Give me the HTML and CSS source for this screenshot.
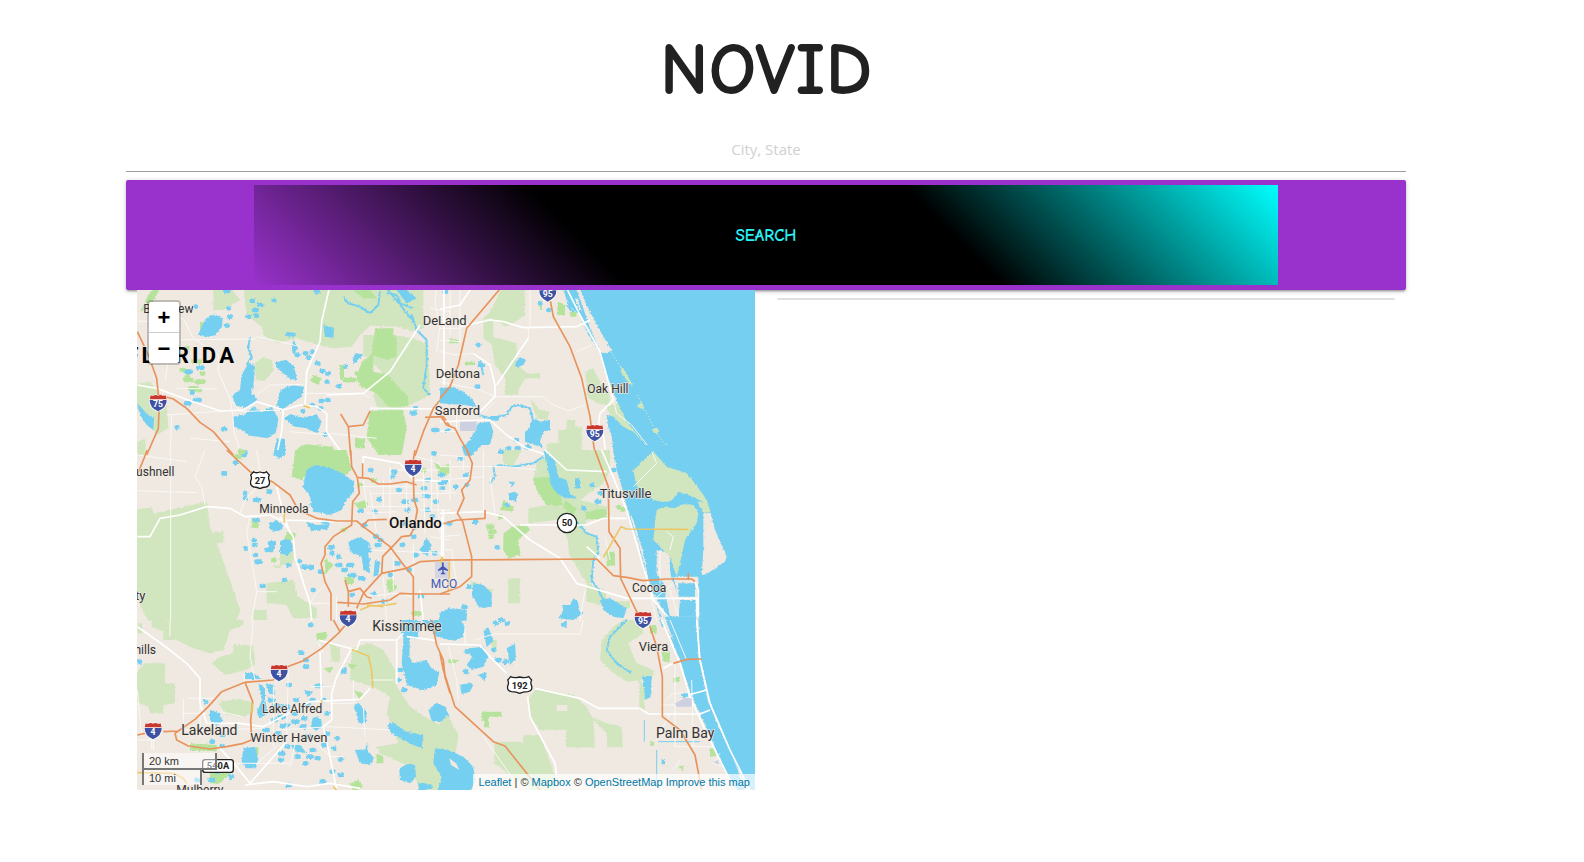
FILE: index.html
```
<!DOCTYPE html>
<html lang="en">
<head>
<meta charset="utf-8">
<meta name="viewport" content="width=device-width, initial-scale=1">
<title>NOVID</title>
<link rel="stylesheet" href="styles.css">
</head>
<body>
<main class="container">
  <h1 class="title">NOVID</h1>
  <form class="search">
    <input class="search-input" type="text" placeholder="City, State" aria-label="City, State">
    <button class="search-button" type="button"><span class="search-label">Search</span></button>
  </form>
  <div class="row">
    <section class="col">
      <div class="map">
        <svg class="map-canvas" viewBox="0 0 1854 1500" preserveAspectRatio="xMidYMid slice" role="img" aria-label="Map of Central Florida">
          <defs>
            <filter id="shoreline" x="-5%" y="-5%" width="110%" height="110%">
              <feTurbulence type="fractalNoise" baseFrequency="0.16" numOctaves="2" seed="4"/>
              <feDisplacementMap in="SourceGraphic" scale="9" xChannelSelector="R" yChannelSelector="G"/>
            </filter>
            <symbol id="interstate" viewBox="0 0 57 56">
              <path d="M5 4q6 3 12 0q5-3 11 1q6-4 12-1q6 3 12 0q3 7 4 15q1 26-28 36Q0 45 1 19Q2 11 5 4z" fill="#fff"/>
              <path d="M3 19h51q1 22-26 34Q2 41 3 19z" fill="#3f51a3"/>
              <path d="M6 5q6 3 11 0q6-2 11 1q6-3 11-1q6 3 12 0l3 12H3z" fill="#c8382f"/>
            </symbol>
            <symbol id="us-route" viewBox="0 0 62 56">
              <path d="M12 3q7 6 19 1q12 5 19-1l9 10q-5 8 0 18q3 14-10 18q-11 0-18 5q-7-5-18-5Q0 45 3 31q5-10 0-18z" fill="#fff" stroke="#222" stroke-width="4"/>
            </symbol>
            <symbol id="us-route-wide" viewBox="0 0 80 58">
              <path d="M13 4q10 5 27 1q17 4 27-1l9 10q-5 8 0 18q3 15-12 17q-15 0-24 5q-9-5-24-5Q1 47 4 32q5-10 0-18z" fill="#fff" stroke="#222" stroke-width="4"/>
            </symbol>
          </defs>

          <!-- north-west -->
          <g transform="translate(-21 -15)">
            <path class="park" d="M340 0H880V130L845 140L800 125L720 122L690 150L665 185L610 190L565 180L500 160L440 175L400 150L395 125L350 90z M700 150L790 150L850 160L895 180L900 330L800 380L745 380L730 330L755 260L700 210z M375 235L400 215L425 225L432 255L405 288L378 285z M0 300L60 290L110 350L115 430L80 450L22 370z M250 5h50l30 40l-50 30h-30z M22 470l25-8v50h-25z"/>
            <path class="wood" d="M30 80L60 20L92 5L70 50L40 75z M735 130h55v25h10v60l-30 10l-40-15v50l45 10l30 35l30 30v30h-60l-35-40l-50-20l-10-30l15-45l30-20z M720 378l100-3l10 55l-15 80h-70l-35-55z M500 510q0-40 50-30l60 5l20 50z M550 270l25 10l-10 20l-25-12z M675 460h30v30h-30z M210 110l25 5v40l-25-10z M630 240h12v45h-12z M670 15h50l20 25h-40z"/>
            <path class="ponds woods" d="M155 255h6M170 275h4M190 230h20M165 285h20M200 290h20M180 310h20M200 315h10M215 265h5M150 210h4M170 190h3M645 285h30M680 265h10"/>
            <path class="water" d="M225 105Q240 86 262 90L278 100L276 125L255 152L222 155L204 150L214 128z M355 235L375 240L372 285L365 325L385 345L350 368L318 362L306 330L330 315L335 270z M437 230L470 225L492 245L502 285L480 282L455 260L440 248z M450 320Q470 300 498 302L522 305L515 335L485 355L455 375L440 360z M310 395L345 388L370 365L395 380L425 365L445 400L440 440L415 460L360 452L335 435L312 425z M462 400L480 388L520 398L560 388L575 410L562 445L530 430L495 425z M22 355L50 385L72 400L70 435L50 420L30 390z M440 460L465 462V512H430z M580 118L612 130L610 158L585 155z M675 205L700 208L675 238L668 225z M470 140l30 5l-10 12l-25-5z M490 165l15 20l-12 25l-8-15z M830 15l30 25l-30 15l-30-40z"/>
            <path class="river" d="M360 155L355 190L365 215L350 240M640 35L655 55L690 65L720 85L745 60L750 20M770 10L815 65L850 110L845 90L860 135L890 165L890 240L880 310L900 330M770 25L800 30L810 55L850 70"/>
            <path class="ponds" d="M365 48h4M388 60h6M372 75h8M355 95h4M378 92h2M430 45h3M195 65h2M295 70h2M298 95h5M290 122h3M170 260h12M205 248h12M168 355h10M195 345h14M185 322h3M280 432h6M140 427h2M500 210h5M525 205h3M545 200h3M560 235h4M535 218h3M575 258h5M592 265h3M590 290h2M625 303h4M645 245h2M545 360h4M572 348h6M592 345h3M518 378h2M570 370h4M845 385h10M855 370h4M910 435h12M585 448h3M285 18h10M560 20h3"/>
            <path class="minor" d="M22 108L70 110M130 80L165 110L190 160L265 210L265 260L300 340L330 380L450 375M110 165L380 162M140 310L260 312M125 165L105 290M110 390L275 378M120 510L125 390M180 460L300 470M525 325L700 325M380 330L420 300L520 298M380 155L450 170L510 185M700 325L720 340M600 445L740 460M920 0L915 50L930 120L920 200M900 70L960 80M940 20V120M480 440L600 450"/>
            <path class="major" d="M600 0L575 110L570 170L530 260L525 365M22 300L80 310L160 340L270 378L340 375L380 350L460 375L510 360L560 365L590 385V440L640 510M870 120L780 260L700 325L590 330M720 370L960 372M460 375L455 440L440 510"/>
            <path class="minor" d="M265 260L300 340L308 390L312 440L335 510"/>
            <path class="highway" d="M22 140L55 210L80 280L88 355L85 430L50 510M88 330L130 342L170 370L210 412L250 440L310 510M960 310L910 370L880 440L855 512M632 387L655 425L662 512M655 425L700 420L720 378M885 397L940 395L960 425"/>
            <path class="toll" d="M520 362L540 368"/>
          </g>

          <!-- west -->
          <g transform="translate(-21 480)">
            <path class="park" d="M10 180L65 170L70 190L230 155L240 230L268 300L310 420L330 480L320 512H55L22 450H10z M250 245h30v35h-30z M425 350l65-10v-50l-40-5v70z M410 400l80-10l15 50l55 35v30h-70l-20-40l-60-5z M370 480l40 0v30h-40z"/>
            <path class="wood" d="M495 0H650L665 60L640 80L555 45L515 90L485 80L490 45z M365 205h20v30h-20z M470 245l30 5l-8 20h-30z M585 325l25 20l-25 30z M670 160l40-10l5 20l-25 10z M770 400l35 15l-30 15z M640 380l35 5l-20 20z M910 30l40 40l-20 10z"/>
            <path class="water" d="M530 60L555 45L600 52L640 72L672 95L672 125L650 150L635 180L600 195L560 185L545 170L540 140L518 110z M418 218L440 210L460 225L455 240L430 245L418 235z M450 275Q465 262 485 272L490 300L470 318L450 308z M655 275L690 260L720 280L715 310L720 370L700 360L695 320L660 305z M868 300L890 265L905 285L895 320z M930 495L960 470V512H925z M435 0H460L455 25L440 25z M528 215L560 225L600 222L590 240L560 235L545 245z M735 330L750 335L745 375L730 380z"/>
            <path class="ponds" d="M315 38h3M338 15h6M345 10h2M280 70h5M345 130h3M345 145h2M375 150h12M415 125h5M375 210h8M370 270h4M372 285h4M345 295h2M375 315h3M380 335h12M410 300h14M420 280h12M420 292h8M395 408h6M475 345h3M505 333h5M518 350h10M540 352h8M570 365h4M462 390h2M548 420h3M600 292h8M605 310h4M625 320h3M620 345h12M640 360h6M660 375h14M655 345h12M690 385h10M705 330h10M710 300h8M740 285h8M750 270h3M735 260h5M720 60h4M745 148h5M735 185h2M690 183h5M785 80h3M790 65h6M805 120h4M820 155h8M830 180h6M850 150h8M880 115h6M885 138h12M915 155h6M890 90h6M930 98h14M930 75h3M910 10h4M850 232h5M850 260h3M910 310h6M815 285h5M855 315h6M800 340h6M835 360h5M780 375h4M730 432h5M665 435h4M760 455h3M870 440h6M545 165h5M555 180h8M700 225h5M820 220h3M905 200h5M890 180h4M580 215h12M555 235h10"/>
            <path class="ponds woods" d="M320 20h10M330 5h10M690 105h4M730 90h3M880 60h5M640 240h3M600 345h2M775 395h12M790 410h4M660 395h6M430 330h5M850 490h20"/>
            <path class="minor" d="M122 0V512M22 122L200 128M22 15L170 35M225 0L195 80L215 110L225 165M380 0L390 60M330 190L345 150L420 70M360 200L350 250L370 360L380 425L365 512M380 425L440 425M700 90L710 170L830 170M710 190L800 185M780 50V220M800 60L960 60M830 90V180M860 20L930 40M920 100L930 250M690 110L850 110M880 60L885 250M870 180L960 180M850 280L850 512M720 300L940 310M545 460H600M590 400L560 430L540 460M740 250L720 120M900 260L960 270M700 440L800 430L850 440M720 130H960M905 20V180M760 90V170M620 440V512M760 380L770 512M790 320V420"/>
            <path class="major" d="M22 260H60L90 205L150 195L230 170L300 175L345 200L420 195L450 210L640 215M450 200L490 260L495 320L540 460L545 512M440 110L460 190L480 250M700 80V20L810 40L850 90L960 95M940 180V400M870 420L880 512"/>
            <path class="highway" d="M52 0L22 75M290 0L360 65L430 97L480 135L505 180L560 205L620 213L680 213L700 230L780 290L825 350L850 380V512M662 0L665 50L682 82L688 130L668 155L665 225L610 260L585 290L585 315L573 340L585 395L603 430L603 512M680 82L715 85L745 102H780L830 95L860 105M698 40V82M850 80L852 148L862 180L852 235L840 257L815 260L785 292L758 320L755 370L830 355L870 335L960 330M695 230L715 210L770 208M755 370L700 430L680 475M645 390L655 425V470M622 457L700 462L780 450L810 430L855 432L960 432M655 425L690 415L710 440L725 445M855 0L845 60M940 220H960"/>
            <path class="toll" d="M463 180V218M690 480L720 468L770 465L800 460M710 465L760 470M938 320V335M955 335V420"/>
            <path d="M915 335h45v50h-45z" fill="#d4d5e3"/>
          </g>

          <!-- south-west -->
          <g transform="translate(-21 990)">
            <path class="park" d="M65 0H340V15L300 30L280 90L240 100L190 85L140 60L100 60V35L65 20z M45 130h60v60h30v60l-35 5v25H60l-5-20l-38-15V160z M245 130L270 110L310 100V75h60l5 60l-30 15l-60 15z M265 245l60-8l45 10v30l-30 15l-55-10z M665 85L720 70L760 90L795 150V190L840 260L900 300L960 330V510H870L840 440L750 400L740 380L805 370L770 280L780 230L730 200L660 180z M600 70l30 15v40h-25z M22 10h15v30H22z"/>
            <path class="wood" d="M560 40l30-5v25l-30 5z M580 145l30-5l-10 20z M340 390l45-10v25l-40 15z M240 450l60 10l-30 30h-30z M670 210l30 10l-10 20z M660 490l25-10l15 20l-30 15z M650 130l30 5l-15 15z M180 370l80 5v18h-80z M740 400l20 10v20h-20z"/>
            <path class="water" d="M810 0H870L865 55L840 55L838 110L850 130L890 120L905 145L928 155L920 195L880 210L830 195L815 130L820 60z M875 0H960V60L920 50z M670 260L685 248L710 275L708 310L685 308L682 285z M895 270L920 248L945 260L958 290L940 308L905 302z M770 315L790 308L830 335L880 345L875 385L850 375L820 360L785 340z M675 390L705 388L712 365L712 390L732 415L720 435L690 430z M808 450Q825 425 855 435L858 470L840 490L810 480z M340 385L375 380L385 420L375 445L350 445L335 425z M240 270L270 280L278 305L260 318L240 300z M548 295Q560 285 575 300V320L558 332L542 320z M385 190L405 205V240L415 280L390 295L380 280L395 240z M410 190L430 195L435 225L415 220z M520 210L550 215L535 232z M635 145L650 140V162L632 160z M865 490l25 0v20h-25z M480 375L510 375L530 400L500 395z M345 160l20-3l30 20h-50z M218 235l20 10l-15 10z"/>
            <path class="ponds" d="M475 195h4M495 240h6M545 240h6M560 198h10M580 240h3M590 280h4M490 280h8M490 305h12M515 320h8M450 290h10M455 318h12M430 260h14M430 300h8M450 260h10M470 315h4M525 350h12M620 355h3M590 340h4M580 375h8M610 385h3M535 410h10M560 415h6M545 390h6M500 410h6M470 380h4M450 400h10M450 420h6M525 430h4M630 418h4M630 465h4M605 455h4M575 485h6M472 495h8M275 345h5M245 365h4M275 378h3M300 470h6M200 480h6M240 480h10M260 455h4M280 430h10M290 440h6M405 330h8M440 340h8M820 210h5M808 150h5M805 180h3M525 140h6M525 120h6M510 98h5M540 15h4M28 125h2M420 240h10M893 500h8M470 260h5M520 295h6M530 255h4"/>
            <path class="minor" d="M120 0V50M22 210L35 350M160 235V330H220M175 235H260M210 180V350M375 180L360 110L370 0M270 275L340 290M265 330L400 325M475 150L470 350M440 330L600 320L780 330M600 250H670V180M720 180H790M560 370L600 410H640M240 440L330 430L480 430M340 160L345 190M155 280H230M605 200L540 200M22 360H70V390M65 360V390M430 200V380M560 60L580 100M700 260L705 350M480 440L500 350M380 430L440 380"/>
            <path class="major" d="M22 20L100 75L170 130L210 175V250L230 310M230 310H330L400 320L540 245L690 238L720 205M570 95L575 240M565 60L680 90M680 90L690 60L800 60L820 40M800 60V190M665 85L620 170L605 220V300L580 320L600 410L620 510M470 365L360 490L320 440L270 385M345 495L430 485L530 500L600 490L690 505M830 50L920 62"/>
            <path class="highway" d="M655 5L625 40L575 85L520 122L460 145L430 180L345 187L275 215L235 260L195 298L145 333L100 335M22 345L45 340M145 333L135 340L140 360L175 378L240 387L290 380L340 370L365 360L362 300L368 245L345 187M610 0L630 35M905 0L920 75L940 120L945 170L960 220"/>
            <path class="toll" d="M665 88L715 108L725 150L728 205M575 240V250M22 458L130 460L160 475L170 490M610 500L620 510M368 250L365 280"/>
          </g>

          <!-- north-east -->
          <g transform="translate(909 -15)">
            <path class="park" d="M190 0H255V90L200 125L155 100L125 105L150 80z M130 105h30v50l70 20v60l30 30h40v15h-45l-20 35v15h-40v-50l-30-40l-10-60l-25-20z M435 260l25-10l15 30l15 30l18 15v35l-30-3l-35-20z M500 365L540 350L560 400L590 430L640 510L570 440L520 415z M270 340l30 35l30 5l-10 25l-30-5z M325 475h30v-40l25 0v-30h25v20h20v85h-110z"/>
            <path class="wood" d="M355 50l20 10v30h-25z M75 230h30v10h-30z M30 160l25 5v10h-25z M300 50h6v25h-6z M390 80h20v15h-20z"/>
            <path class="water" d="M415 0H980V530H660L560 410L525 335L490 240L480 200L500 205L515 195L490 155L460 100L440 60z M365 0H405L430 70L450 130L480 200L445 150L420 90L385 60z M500 390L520 395L550 425L580 440L645 512V525H523L515 450L505 430z M0 310L40 305L70 320L95 340L110 365L70 360L0 355z M75 512L65 485L90 465L115 415L150 410L160 440L150 480L125 480L95 512z M270 410L285 400L300 410L330 405L330 435L310 440L300 470L310 490L285 480L255 470L255 440L270 430z M225 235L240 217L258 225L250 240L230 247z"/>
            <path class="sand" d="M442 90l12 10l30 50l28 45l-12 10l-30-35l-20-50z M405 40l8 3l12 35l-6 0z"/>
            <path class="park" d="M540 245l10 5l28 50l-10-3l-25-35z M590 365l15-15l7 25z M635 435l15-8l8 12l-12 8z M678 475l8 15l-8 0z"/>
            <path d="M592 330L640 425M650 445L690 495M512 200L545 250" fill="none" stroke="#dceac8" stroke-width="3" stroke-dasharray="4 6"/>
            <path class="river" d="M115 390L150 400L200 390L215 365L235 360L270 370L280 410M120 225L130 270M380 60L400 80L410 60"/>
            <path class="ponds" d="M115 180h3M120 240h8M110 305h5M155 400h16M20 435h3M205 490h3M228 465h3M230 490h6M260 487h8M325 75h2M300 55h2M15 20h4"/>
            <path class="minor" d="M270 0V125M0 165L60 170V15M60 100H0M0 200L50 210L100 205M265 125V160M0 290L120 315L165 335L310 335L330 355L385 378L435 360M410 200L455 180M165 350L130 385M50 370V440H0M0 440L30 425M30 15V150M0 130H60"/>
            <path class="major" d="M12 0V300M0 72L60 60L100 0M60 125L150 105L190 110L250 128L410 125L440 110L450 105M375 0L420 90L480 200L520 345L480 385L475 425L490 450L498 510M100 205L150 240L165 300V335L120 380M265 160L170 300M0 410L150 405L200 450L260 490L320 510"/>
            <path class="minor" d="M520 345L530 385L575 420L645 510"/>
            <path class="highway" d="M190 0L80 130L55 240L30 305L0 340M325 15L340 95L390 185L425 280L450 395L465 510M0 390L20 420L45 430L60 460L90 512"/>
            <path d="M60 410h50v28h-50z" fill="#ccd0e1"/>
          </g>

          <!-- east -->
          <g transform="translate(909 480)">
            <path class="park" d="M290 40L320 15L380 0H510L510 60L490 100L420 150L500 170V200L440 210L430 240L470 260L480 300L455 340V400H440L385 310L385 270L350 210L265 220V175L330 165L280 90z M440 400l55 20l5 30l70 5v20l-70-5l-60-15z M205 385h35v75h-35z M90 390l70 30l-20 50l-30-20z M185 0h60l-25 50l-30-10z"/>
            <path class="wood" d="M278 85L325 80L335 105L360 130L370 165L320 165L290 120z M190 250L215 230L260 225L270 240L235 270L242 315L205 325L190 300z M435 185L500 175V205L440 210z M500 305l25 0v40l-25 5z M0 50l30-10v30L0 80z M190 150l30 20v15l-40-5z M375 150l35 25l-10 20l-30-20z"/>
            <path class="ponds woods" d="M145 230h12M150 245h14M150 260h6M535 172h3M548 178h3M180 200h4"/>
            <path class="water" d="M520 -15H980V530H665L640 430L610 350L595 280L565 190L545 110L530 60z M310 0L345 30L355 80L380 90L390 130L410 145L375 145L345 125L330 100L325 60z M480 450L510 445L560 475L550 505L520 500L490 480z M100 400L130 405L155 430L155 470L120 475L95 435z M355 505L370 480L365 465L390 465L400 445L415 455L415 480L430 490L400 510z M405 85h15v30h-15z M0 485L40 475L80 480V512H0z M205 130l20-5l10 10l-10 20l-15-5z M205 95l20 0l-5 15z"/>
            <path class="sand" d="M790 190L812 188L825 240L860 320L855 335L800 372L785 375L790 300z M650 300L690 310L690 370L720 450L715 512L690 500L670 400L650 370z M565 180l15 30l30 100l20 100l66 120h-16l-52-110l-20-100z M700 380h75v150h-8v-80h-50z"/>
            <path class="park" d="M580 60L600 40L640 5L680 50L740 70L780 120L800 150L812 185L790 190L770 150L740 135L700 150L650 160L610 120L590 110z M650 180L700 160L760 165L775 190L770 220L735 270L720 340L710 380L690 320L660 290L640 270L645 220z"/>
            <path class="water" d="M640 150l50 10l25-35l30 10l45 20l-50 0l-35 20l-70-10z M715 400h50v40h-50z M720 455h48v75h-40z"/>
            <path class="river" d="M170 45L220 50L280 40L310 20M160 50L165 80L150 100M410 215L440 250L470 260L475 310L460 330L455 390L475 420L490 450"/>
            <path class="ponds" d="M10 95h8M5 115h4M45 110h3M75 75h4M80 105h2M105 215h4M170 292h4M200 165h3M25 220h6M470 155h8M455 105h2M480 130h4M430 175h2M520 60h3M85 410h4M70 470h8M180 5h6M60 25h6M5 75h4"/>
            <path class="minor" d="M0 15L70 20V60M0 90L130 80M130 0V190M0 120L50 130M95 50H200L290 60M0 300H35L50 400M165 190L150 80M30 30V150M0 260L60 255M420 512L435 420M495 260L510 330M580 110L650 40L635 5M660 300V400M640 450L700 400M690 300L700 260L680 245M620 390L650 512M690 420L715 500M0 50H95"/>
            <path class="major" d="M0 190L130 185L190 200L270 270L360 325L410 400L560 445H770V512M240 225H440L490 205H560M485 0L515 70L560 180L610 350L640 450L700 520M315 0L380 60L500 65M5 200V320M765 395L775 420V512M480 325L440 290"/>
            <path class="highway" d="M80 0L97 40L90 90L65 120L72 145L52 190L68 215L95 320V380L60 410L0 432M20 218L50 210L135 205V180M0 330L470 327L520 377L560 382L610 392L680 387H755L765 395M745 370V390M465 0L505 110L507 245L540 295L542 385L590 485L620 512"/>
            <path class="toll" d="M490 322L543 230L560 237L745 238M5 320V345M28 335V385"/>
          </g>

          <!-- south-east -->
          <g transform="translate(909 990)">
            <path class="park" d="M520 20L550 0L600 0L610 40L565 70L590 130L640 150V170L600 180L615 200V270H598V180L560 185L520 160L480 120L485 60z M265 235L290 205L400 225L440 260L455 290L500 310L545 320L548 382L502 382L500 340L460 300L465 382H378V330H300L275 300z M163 365H250V345H300L345 465V512H280L163 430z M0 260L20 280L55 345L45 410L0 390z M60 30l15 5v-25h-15z M155 60h15v25h-15z"/>
            <path class="land" d="M350 255h32v18h-32z"/>
            <path class="wood" d="M125 275h60v15h-38v32h-15v-20h-7z M700 175l20-5v15h-20z M25 118l35 2l-15 10h-20z M715 440l15-5v20z M665 95h25v30h-20z M630 365h12v12h-12z M810 385h18v25h-18z M630 15h20v25h-20z"/>
            <path class="water" d="M0 0H60L75 20L70 50L45 62L10 55L0 30z M60 195L85 188L100 195L90 215L65 222z M85 85L130 80L145 110L130 140L95 150L80 135L95 115z M200 85L225 70L228 115L210 135z M115 165l25-8l-5 25z M130 30l15-8l15 40l-20 20z M610 168H635L632 230L615 240z M0 255L25 280L10 300L0 305z M-15 385L25 390L70 410L100 440L105 480L90 520H-10L5 470L-20 430z M665 -10H980V540H890L850 440L800 300L760 200L725 130z M665 418h10v15h-10z M360 15l20-15v25z"/>
            <path class="land" d="M28 415l20 15l10 20l-25-15z"/>
            <path class="sand" d="M655 -10h120l5 130l30 130l60 150l70 130h-60l-60-150l-60-190l-40-100z"/>
            <path class="water" d="M674 -10H768L775 110L803 240L835 320L890 440L920 530H905L850 440L820 370L785 290L750 215L715 100z"/>
            <path class="river" d="M560 0L510 50L500 90L530 130L575 160M612 170V200"/>
            <path d="M613 300V365M650 390V500M655 365H780" fill="none" stroke="#75cff0" stroke-width="3"/>
            <path class="ponds" d="M165 10h6M180 0h8M200 10h3M170 120h8M195 125h5M160 90h3M80 95h4M75 155h4M730 225h8M90 460h4"/>
            <path class="minor" d="M75 70V10M160 42H420L430 0M25 80L50 180L55 240M130 350L215 470M705 130V380M660 255H760M680 240L700 220L745 218M705 380H820M650 360L690 280M755 180L760 380M840 400L820 430L850 440M105 60L160 42M720 420L700 450M690 0L740 120"/>
            <path class="major" d="M0 72L120 75L150 110L200 160M285 205L420 235L475 265H600L625 282H780L810 270M745 225L800 210M263 230L270 290L345 430L350 465M665 0L720 130L750 230L800 340L880 500M770 0L780 120L810 250L870 390L930 510M670 145L700 130"/>
            <path class="highway" d="M0 100L10 150L45 260L160 365L195 378L300 510M630 20L650 80L667 170V290L720 330L765 405L785 510M700 130L740 118L785 117"/>
            <path d="M705 250l30-15h20v25h-45z M820 425l15-5v15z" fill="#ccd0e1"/>
          </g>

          <!-- road shields -->
          <g class="shield-text">
            <use href="#interstate" x="35" y="311" width="57" height="56"/><text x="63" y="351">75</text>
            <use href="#interstate" x="1204" y="-18" width="57" height="56"/><text x="1232" y="22">95</text>
            <use href="#interstate" x="1345" y="401" width="57" height="56"/><text x="1373" y="441">95</text>
            <use href="#interstate" x="800" y="505" width="57" height="56"/><text x="828" y="545">4</text>
            <use href="#interstate" x="605" y="957" width="57" height="56"/><text x="633" y="997">4</text>
            <use href="#interstate" x="1490" y="962" width="57" height="56"/><text x="1518" y="1002">95</text>
            <use href="#interstate" x="398" y="1121" width="57" height="56"/><text x="426" y="1161">4</text>
            <use href="#interstate" x="20" y="1295" width="57" height="56"/><text x="48" y="1335">4</text>
          </g>
          <g class="route-text">
            <use href="#us-route" x="338" y="542" width="62" height="56"/><text x="369" y="581">27</text>
            <use href="#us-route-wide" x="1108" y="1156" width="80" height="58"/><text x="1148" y="1196">192</text>
            <circle cx="1290" cy="699" r="29" fill="#fff" stroke="#222" stroke-width="4"/><text x="1290" y="709">50</text>
            <rect x="197" y="1409" width="92" height="38" rx="8" fill="#fff" stroke="#222" stroke-width="4"/><text x="243" y="1438">540A</text>
          </g>

          <!-- place names -->
          <g class="place">
            <text class="state" x="301" y="218" text-anchor="end">FLORIDA</text>
            <text class="town" x="19" y="70">Belleview</text>
            <text x="857" y="105">DeLand</text>
            <text x="896" y="265">Deltona</text>
            <text x="893" y="376">Sanford</text>
            <text class="town" x="1351" y="308">Oak Hill</text>
            <text class="town" x="112" y="558" text-anchor="end">Bushnell</text>
            <text class="town" x="367" y="669">Minneola</text>
            <text x="1388" y="624">Titusville</text>
            <text class="city" x="756" y="714">Orlando</text>
            <text class="town" x="1485" y="905">Cocoa</text>
            <text x="25" y="930" text-anchor="end">Dade City</text>
            <text class="county" x="706" y="1022">Kissimmee</text>
            <text class="town" x="57" y="1092" text-anchor="end">Zephyrhills</text>
            <text x="1505" y="1082">Viera</text>
            <text class="town" x="375" y="1269">Lake Alfred</text>
            <text class="county" x="133" y="1335">Lakeland</text>
            <text x="340" y="1355">Winter Haven</text>
            <text class="county" x="1557" y="1343">Palm Bay</text>
            <text class="town" x="118" y="1513">Mulberry</text>
            <text class="airport" x="881" y="893">MCO</text>
            <path d="M915 818q3-2 5 0v11l13 10v4l-13-4v8l5 4v2h-14v-2l5-4v-8l-13 4v-4l12-10z" fill="#4458b5"/>
          </g>
        </svg>

        <div class="zoom">
          <button class="zoom-button" type="button" aria-label="Zoom in">+</button>
          <button class="zoom-button" type="button" aria-label="Zoom out">−</button>
        </div>
        <div class="scale">
          <div class="scale-line scale-km">20 km</div>
          <div class="scale-line scale-mi">10 mi</div>
        </div>
        <div class="attribution"><a href="#">Leaflet</a> | © <a href="#">Mapbox</a> © <a href="#">OpenStreetMap</a> <a href="#">Improve this map</a></div>
      </div>
    </section>
    <section class="col">
      <div class="results"></div>
    </section>
  </div>
</main>
</body>
</html>
```
FILE: styles.css
```
* {
  box-sizing: border-box;
}

body {
  margin: 0;
  padding-right: 52px;
  background: #fff;
  color: #212121;
  font: 15px/24px "Segoe UI", "Open Sans", "Noto Sans", sans-serif;
}

.container {
  width: 90%;
  max-width: 1280px;
  margin: 0 auto;
}

.title {
  margin: 0;
  padding: 34px 0 21px;
  font: 700 75px/72px "Comic Sans MS", "Comic Neue", Lato, sans-serif;
  text-align: center;
}

.search-input {
  display: block;
  width: 100%;
  height: 45px;
  margin: 0 0 8px;
  padding: 0;
  border: 0;
  border-bottom: 1px solid #9e9e9e;
  background: transparent;
  font: inherit;
  text-align: center;
}

.search-input::placeholder {
  color: #d1d1d1;
  opacity: 1;
}

.search-button {
  display: block;
  width: 100%;
  padding: 5px 0;
  border: 0;
  border-radius: 2px;
  background: #9932cc;
  box-shadow: 0 2px 2px rgba(0, 0, 0, .14), 0 3px 1px -2px rgba(0, 0, 0, .12), 0 1px 5px rgba(0, 0, 0, .2);
  cursor: pointer;
}

.search-label {
  display: block;
  width: 80%;
  margin: 0 auto;
  background: linear-gradient(45deg, darkorchid, #000, #000, cyan);
  color: #2bf0f5;
  font: 700 17px/102px "Comic Sans MS", "Comic Neue", Lato, sans-serif;
  height: 100px;
  text-transform: uppercase;
}

.row {
  display: grid;
  grid-template-columns: 1fr 1fr;
}

.col {
  padding: 0 11px;
}

.map {
  position: relative;
  height: 500px;
  overflow: hidden;
  background: #efe9e2;
  font: 11px/16px "Liberation Sans", Arial, sans-serif;
}

.map-canvas {
  display: block;
  width: 100%;
  height: 100%;
}

.land,
.sand {
  fill: #efe9e2;
}

.park {
  fill: #d1e6be;
}

.wood {
  fill: #b6e39b;
}

.water {
  fill: #75cff0;
}

.park,
.wood,
.water,
.ponds,
.river,
.sand {
  filter: url(#shoreline);
}

.river,
.ponds,
.minor,
.major,
.highway,
.toll {
  fill: none;
  stroke-linejoin: round;
}

.river {
  stroke: #75cff0;
  stroke-width: 6;
}

.ponds {
  stroke: #75cff0;
  stroke-width: 14;
  stroke-linecap: round;
}

.woods {
  stroke: #b6e39b;
}

.minor {
  stroke: #faf8f5;
  stroke-width: 3;
}

.major {
  stroke: #fff;
  stroke-width: 5;
}

.highway {
  stroke: #e8935c;
  stroke-width: 5;
}

.toll {
  stroke: #ebc768;
  stroke-width: 5;
}

.shield-text,
.route-text {
  font: 700 26px Roboto, sans-serif;
  text-anchor: middle;
  fill: #fff;
}

.route-text {
  font-size: 28px;
}

.route-text text {
  fill: #222;
}

.place {
  font: 400 39px Roboto, sans-serif;
  fill: #333;
  stroke: #efe9e2;
  stroke-width: 4;
  stroke-linejoin: round;
  paint-order: stroke;
}

.place path {
  stroke: none;
}

.place .town {
  font-size: 36px;
}

.place .county {
  font-size: 42px;
}

.place .city {
  font-size: 45px;
  font-weight: 500;
  fill: #111;
}

.place .state {
  font-size: 66px;
  font-weight: 700;
  letter-spacing: 10px;
  fill: #000;
}

.place .airport {
  font-size: 36px;
  fill: #4458b5;
}

.zoom {
  position: absolute;
  top: 10px;
  left: 10px;
  overflow: hidden;
  border: 2px solid rgba(0, 0, 0, .2);
  border-radius: 4px;
  background-clip: padding-box;
}

.zoom-button {
  display: block;
  width: 30px;
  height: 30px;
  padding: 2px 0 0;
  border: 0;
  background: #fff;
  color: #000;
  font: 700 22px/28px "Liberation Sans", sans-serif;
  cursor: pointer;
}

.zoom-button:first-child {
  height: 31px;
  border-bottom: 1px solid #ccc;
}

.scale {
  position: absolute;
  bottom: 5px;
  left: 5px;
  color: #333;
}

.scale-line {
  height: 17px;
  padding: 0 5px;
  border: 2px solid #777;
  background: rgba(255, 255, 255, .5);
  line-height: 17px;
}

.scale-km {
  width: 75px;
  border-top: 0;
}

.scale-mi {
  width: 60px;
  margin-top: -2px;
  border-bottom: 0;
}

.attribution {
  position: absolute;
  right: 0;
  bottom: 0;
  padding: 0 5px;
  background: rgba(255, 255, 255, .7);
  color: #333;
}

.attribution a {
  color: #0078a8;
  text-decoration: none;
}

.results {
  margin: 8px 0;
  border: 1px solid #e0e0e0;
  border-radius: 2px;
}
```
